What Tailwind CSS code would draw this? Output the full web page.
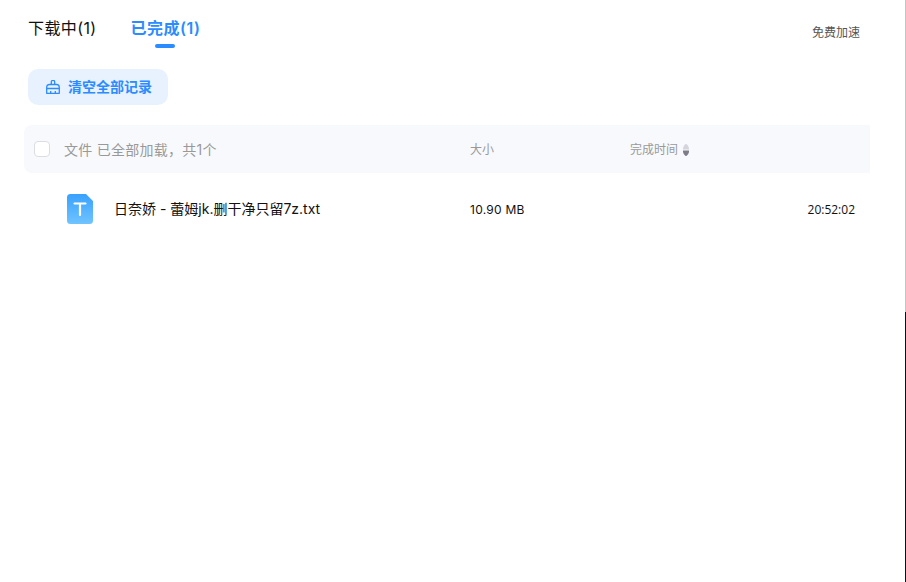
<!DOCTYPE html>
<html lang="zh-CN">
<head>
  <meta charset="UTF-8" />
  <title>已完成</title>
  <script src="https://cdn.jsdelivr.net/npm/@tailwindcss/browser@4"></script>
</head>
<body class="bg-white h-[582px] w-[906px] overflow-hidden relative font-['Inter','Noto_Sans_CJK_SC',sans-serif]">

  <!-- window edge -->
  <div class="absolute right-0 top-0 w-px h-[312px] bg-[#c4c4c4]"></div>
  <div class="absolute right-0 top-[312px] w-px h-[270px] bg-[#0a0a3c]"></div>

  <div class="pl-6 pr-9">
    <!-- tabs -->
    <div class="flex items-start justify-between pl-1 pr-2.5 h-[69px]">
      <div class="flex gap-[34px] pt-[16px]">
        <div class="text-base leading-6 tracking-[0.4px] text-[#111]">下载中(1)</div>
        <div class="flex flex-col items-center">
          <div class="text-base leading-6 tracking-[0.5px] font-semibold text-[#2b8cff]">已完成(1)</div>
          <div class="w-5 h-1 mt-1 mr-0.5 rounded-full bg-[#2b8cff]"></div>
        </div>
      </div>
      <div class="text-xs leading-4 mt-[25px] text-[#555]">免费加速</div>
    </div>

    <!-- clear button -->
    <div class="pl-1">
      <button class="flex items-center gap-2 w-[140px] h-9 pl-[18px] rounded-[10px] bg-[#e8f2ff] text-sm font-semibold text-[#2b8cff]">
        <svg class="w-[14px] h-[14px]" viewBox="0 0 14 14" fill="none" stroke="#2b8cff" stroke-width="1.3" stroke-linejoin="round">
          <path d="M5.300 4.500V2a1.700 1.700 0 0 1 3.400 0v2.500" />
          <path d="M0.700 7.500c0-1.800 1-3 2.800-3h7c1.800 0 2.800 1.200 2.800 3v5.800H0.700z" />
          <path d="M0.700 8.500h12.600M4.700 13.300v-2.300M9.300 13.300v-2.300" />
        </svg>
        清空全部记录
      </button>
    </div>

    <!-- table header -->
    <div class="flex items-center h-12 mt-5 rounded-l-lg bg-[#f8f9fd]">
      <span class="w-4 h-4 ml-2.5 rounded-[4px] border border-[#dcdde2] bg-white"></span>
      <div class="w-[406px] ml-3.5 mt-0.5 text-sm tracking-[0.25px] text-[#999]">文件 已全部加载，共1个</div>
      <div class="w-40 mt-0.5 text-xs text-[#999]">大小</div>
      <div class="flex items-center gap-[5px] mt-0.5 text-xs text-[#999]">
        完成时间
        <svg class="w-1.5 h-3" viewBox="0 0 6 12">
          <path d="M3 0C4 0 6 2.500 6 5V5.500H0V5C0 2.500 2 0 3 0z" fill="#d4d5da" />
          <path d="M0 6.500H6V7.500C6 9.500 4 12 3 12S0 9.500 0 7.500z" fill="#7c7d88" />
        </svg>
      </div>
    </div>

    <!-- file row -->
    <div class="flex items-center h-[72px] pl-[43px] pr-[15px]">
      <svg class="w-[26px] h-[30px] shrink-0" viewBox="0 0 26 30">
        <defs>
          <linearGradient id="txt-fill" x1="0" y1="0" x2="0" y2="1">
            <stop offset="0" stop-color="#38a1ff" />
            <stop offset="1" stop-color="#70c4ff" />
          </linearGradient>
        </defs>
        <path d="M3.500 0H19l7 7v19.500a3.500 3.500 0 0 1-3.500 3.500h-19A3.500 3.500 0 0 1 0 26.500v-23A3.500 3.500 0 0 1 3.500 0z" fill="url(#txt-fill)" />
        <path d="M7.500 9.500h11M13 9.500v11.500" stroke="#fff" stroke-width="2.200" stroke-linecap="round" fill="none" />
      </svg>
      <div class="w-[356px] ml-[21px] text-sm text-[#111]">日奈娇 - 蕾姆jk.删干净只留7z.txt</div>
      <div class="text-xs mt-0.5 tracking-[0.25px] text-[#111]">10.90 MB</div>
      <div class="ml-auto mt-0.5 text-xs font-['Open_Sans'] text-[#111]">20:52:02</div>
    </div>
  </div>

</body>
</html>
